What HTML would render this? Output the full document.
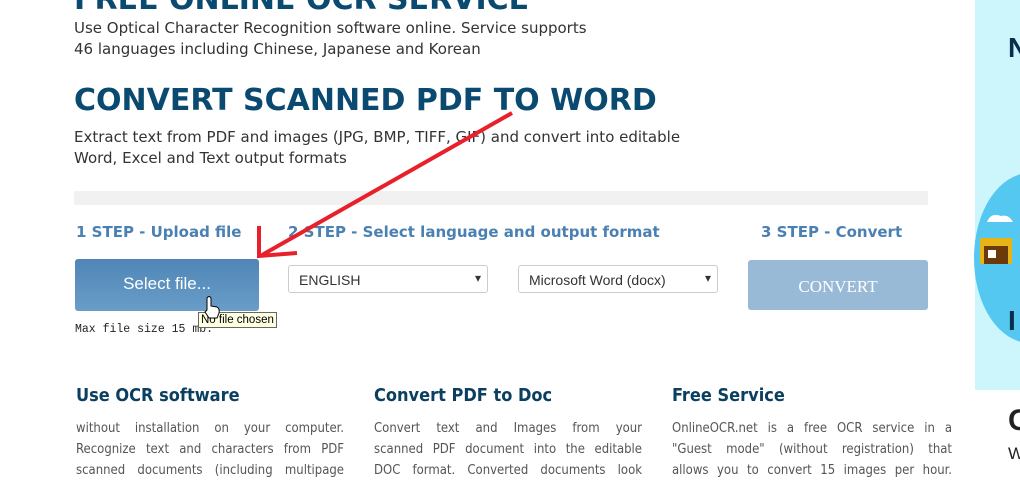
<!DOCTYPE html>
<html><head><meta charset="utf-8"><style>
body{margin:0;width:1020px;height:475px;overflow:hidden;background:#fff;font-family:"DejaVu Sans","Liberation Sans",sans-serif;position:relative}
.a{position:absolute;white-space:nowrap}
h1{position:absolute;margin:0;font-family:"DejaVu Sans",sans-serif;font-weight:bold;color:#0b4a70;font-size:30px}
.p{font-size:15px;color:#333;line-height:21px}
.st{font-family:"DejaVu Sans",sans-serif;font-weight:bold;color:#4a80b2;font-size:15px}
.sel{position:absolute;top:265px;height:28px;border:1px solid #ccc;border-radius:3px;font-family:"Liberation Sans",sans-serif;font-size:14px;color:#333;box-sizing:border-box;padding:6px 10px}
.sel:after{content:"▾";position:absolute;right:6px;top:5px;font-size:12px}
.h3{font-family:"DejaVu Sans",sans-serif;font-stretch:condensed;font-weight:bold;font-size:18px;color:#0b3f60}
.t{position:absolute;font-family:"DejaVu Sans",sans-serif;font-stretch:condensed;font-size:13px;color:#555;line-height:21px;width:268px}
.t div{text-align:justify;text-align-last:justify;white-space:nowrap;height:21px}
</style></head><body>
<h1 style="left:74px;top:-18px">FREE ONLINE OCR SERVICE</h1>
<div class="a p" style="left:74px;top:18px">Use Optical Character Recognition software online. Service supports<br>46 languages including Chinese, Japanese and Korean</div>
<h1 style="left:74px;top:83px">CONVERT SCANNED PDF TO WORD</h1>
<div class="a p" style="left:74px;top:127px">Extract text from PDF and images (JPG, BMP, TIFF, GIF) and convert into editable<br>Word, Excel and Text output formats</div>
<div class="a" style="left:74px;top:191px;width:854px;height:14px;background:#f1f1f1"></div>
<div class="a st" style="left:76px;top:223px">1 STEP - Upload file</div>
<div class="a st" style="left:288px;top:223px">2 STEP - Select language and output format</div>
<div class="a st" style="left:761px;top:223px">3 STEP - Convert</div>
<div class="a" style="left:75px;top:259px;width:184px;height:52px;border-radius:3px;background:linear-gradient(#4f86b6,#6a9dc8);color:#fff;font-family:'Liberation Sans',sans-serif;font-size:17px;text-align:center;line-height:50px">Select file...</div>
<div class="sel" style="left:288px;width:200px">ENGLISH</div>
<div class="sel" style="left:518px;width:200px">Microsoft Word (docx)</div>
<div class="a" style="left:748px;top:260px;width:180px;height:50px;border-radius:3px;background:#98bad7;color:#fff;font-family:'Liberation Serif',serif;font-size:17px;text-align:center;line-height:54px">CONVERT</div>
<div class="a" style="left:75px;top:323px;font-family:'Liberation Mono',monospace;font-size:11.5px;color:#222">Max file size 15 mb.</div>
<div class="a" style="left:198px;top:312px;background:#ffffe1;border:1px solid #666;font-family:'Liberation Sans',sans-serif;font-size:11.5px;padding:1px 2px">No file chosen</div>
<svg class="a" style="left:0;top:0" width="1020" height="475">
<path d="M512 113 L262 255" stroke="#e8202a" stroke-width="4" fill="none"/>
<path d="M259 226 L259 256 L297 253" stroke="#e8202a" stroke-width="4" fill="none"/>
<path d="M207 310 l0-12 q2-3 4 0 v8 l6 1 q3 2 2 6 l-2 5 h-8 l-4-6z" fill="#fff" stroke="#000" stroke-width="1"/>
<rect x="975" y="0" width="45" height="390" fill="#ccf5fc"/>
<ellipse cx="1030" cy="258" rx="56" ry="85" fill="#55c8f2"/>
<path d="M987 222 q4-10 14-6 q8-2 12 6z" fill="#fff"/>
<rect x="980" y="238" width="32" height="26" fill="#e6b416"/>
<rect x="984" y="246" width="24" height="18" fill="#6a3a0a"/>
<rect x="988" y="250" width="8" height="8" fill="#fff"/>
</svg>
<div class="a" style="left:1008px;top:32px;font-family:'Liberation Sans';font-weight:bold;font-size:28px;color:#0b2e4d">N</div>
<div class="a" style="left:1008px;top:305px;font-family:'Liberation Sans';font-weight:bold;font-size:28px;color:#0b2e4d">I</div>
<div class="a" style="left:1008px;top:404px;font-family:'Liberation Sans';font-weight:bold;font-size:30px;color:#222">C</div>
<div class="a" style="left:1008px;top:444px;font-family:'Liberation Sans';font-size:17px;color:#222">W</div>
<div class="a h3" style="left:76px;top:385px">Use OCR software</div>
<div class="a h3" style="left:374px;top:385px">Convert PDF to Doc</div>
<div class="a h3" style="left:672px;top:385px">Free Service</div>
<div class="t" style="left:76px;top:418px"><div>without installation on your computer.</div><div>Recognize text and characters from PDF</div><div>scanned documents (including multipage</div></div>
<div class="t" style="left:374px;top:418px"><div>Convert text and Images from your</div><div>scanned PDF document into the editable</div><div>DOC format. Converted documents look</div></div>
<div class="t" style="left:672px;top:418px;width:280px"><div>OnlineOCR.net is a free OCR service in a</div><div>"Guest mode" (without registration) that</div><div>allows you to convert 15 images per hour.</div></div>
</body></html>
